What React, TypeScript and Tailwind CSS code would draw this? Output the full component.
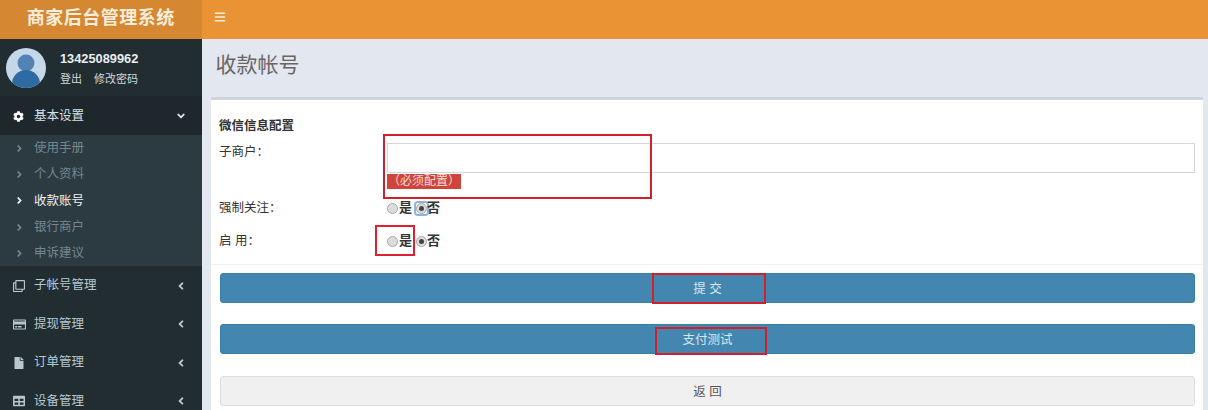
import React from 'react';
import { FaAngleDown, FaAngleLeft, FaAngleRight, FaBars, FaCog, FaFile, FaRegClone, FaRegCreditCard, FaTable } from 'react-icons/fa';

const FONT = '"Liberation Sans", "Noto Sans CJK SC", sans-serif';

const subItems = [
  { label: '使用手册' },
  { label: '个人资料' },
  { label: '收款账号', active: true },
  { label: '银行商户' },
  { label: '申诉建议' },
];

const Avatar = () => (
  <svg width="40" height="40" viewBox="0 0 40 40" className="shrink-0">
    <defs>
      <clipPath id="avatar-clip">
        <circle cx="20" cy="20" r="20" />
      </clipPath>
    </defs>
    <g clipPath="url(#avatar-clip)">
      <rect width="40" height="40" fill="#c4d8ea" />
      <circle cx="20" cy="15" r="8.5" fill="#5383b4" />
      <ellipse cx="20" cy="36" rx="14" ry="14" fill="#2f6ba3" />
    </g>
  </svg>
);

const Radio = ({ checked, focused }: { checked?: boolean; focused?: boolean }) => (
  <span className={`shrink-0 rounded-[2px] ${focused ? 'outline-2 outline-[#8fb4e0]' : ''}`}>
    <span className="flex h-[11px] w-[11px] items-center justify-center rounded-full border border-[#a9a9a9] bg-[#dcdcdc]">
      {checked && <span className="h-[5px] w-[5px] rounded-full bg-[#444]" />}
    </span>
  </span>
);

const RadioPair = ({ focused }: { focused?: boolean }) => (
  <div className="flex items-center text-[13px] font-bold text-[#333]">
    <Radio />
    <span className="ml-px mr-[4px]">是</span>
    <Radio checked focused={focused} />
    <span>否</span>
  </div>
);

const MenuRow = ({ icon, label }: { icon: React.ReactNode; label: string }) => (
  <div className="flex h-[38.5px] items-center pl-[13px] pr-[15px] text-[12.5px] text-[#b8c7ce]">
    <span className="flex w-[21px] shrink-0 items-center">{icon}</span>
    <span className="flex-1">{label}</span>
    <FaAngleLeft size={12} />
  </div>
);

const Button = ({ label, className }: { label: string; className: string }) => (
  <button className={`flex h-[30px] w-full items-center justify-center rounded-[3px] border pt-[2px] text-[12.5px] ${className}`}>
    {label}
  </button>
);

const App = () => {
  return (
    <div className="flex h-[410px] w-[1208px] flex-col overflow-hidden bg-[#e3e7ef]" style={{ fontFamily: FONT }}>
      {/* Header */}
      <div className="flex h-[39px] shrink-0 bg-[#ea9335] text-white">
        <div className="flex w-[201.5px] shrink-0 items-center justify-center bg-[#d68731] pb-[3px] font-['Liberation_Serif','Noto_Sans_CJK_SC',serif] text-[18px] font-bold tracking-[0.5px] text-[#fbeedd]">
          商家后台管理系统
        </div>
        <div className="flex items-center pb-[5px] pl-[12.5px] text-[#fbeedd]">
          <FaBars size={12} />
        </div>
      </div>

      <div className="relative flex min-h-0 flex-1">
        {/* Sidebar */}
        <div className="w-[201.5px] shrink-0 bg-[#222d32]">
          <div className="flex h-[57px] items-center pl-[6px]">
            <Avatar />
            <div className="ml-[14px] pt-px">
              <div className="text-[12.8px] font-bold leading-[16px] text-[#e8eef2]">13425089962</div>
              <div className="mt-[5px] flex gap-[12px] text-[11px] leading-[14px] text-[#d0d8dc]">
                <span>登出</span>
                <span>修改密码</span>
              </div>
            </div>
          </div>

          <div className="flex h-[39px] items-center bg-[#1e282c] pl-[13px] pr-[15px] pt-px text-[12.5px] text-[#d8e0e4]">
            <span className="flex w-[21px] shrink-0 items-center">
              <FaCog size={11} className="text-white" />
            </span>
            <span className="flex-1">基本设置</span>
            <FaAngleDown size={12} />
          </div>

          <div className="h-[131px] bg-[#2c3b41] pt-[0.5px]">
            {subItems.map((item) => (
              <div
                key={item.label}
                className={`flex h-[26.2px] items-center pl-[14px] text-[12.5px] ${
                  item.active ? 'text-[#eef2f4]' : 'text-[#75868e]'
                }`}
              >
                <span className="flex w-[20px] shrink-0 items-center">
                  <FaAngleRight size={11} />
                </span>
                {item.label}
              </div>
            ))}
          </div>

          <div className="pt-[0.5px]">
            <MenuRow icon={<FaRegClone size={12} />} label="子帐号管理" />
            <MenuRow icon={<FaRegCreditCard size={13} />} label="提现管理" />
            <MenuRow icon={<FaFile size={12} />} label="订单管理" />
            <MenuRow icon={<FaTable size={12} />} label="设备管理" />
          </div>
        </div>

        {/* Content */}
        <div className="min-w-0 flex-1 pl-[9.5px] pr-[5px]">
          <div className="flex h-[58px] items-center pb-[6px] pl-[4.5px] text-[21px] text-[#666]">收款帐号</div>

          <div className="h-[320px] border-t-[3px] border-[#cdd4df] bg-white">
            <div className="pl-[8px] pr-[8px] pt-[18px]">
              <div className="pt-px text-[12.5px] font-bold leading-[15px] text-[#333]">微信信息配置</div>
              <div className="mt-[2px] flex">
                <div className="w-[168px] pt-[8px] text-[12.5px] leading-[16px] text-[#333]">子商户：</div>
                <div className="min-w-0 flex-1">
                  <div className="mt-[7px] h-[30px] border border-[#d2d6de] bg-white" />
                  <div className="mt-px w-[74px] bg-[#d0453a] text-center text-[12px] leading-[15px] text-[#f6dcd9]">
                    （必须配置）
                  </div>
                </div>
              </div>

              <div className="mt-[10px] flex h-[18px] items-center">
                <div className="w-[168px] pt-px text-[12.5px] text-[#333]">强制关注：</div>
                <RadioPair focused />
              </div>
              <div className="mt-[15px] flex h-[18px] items-center">
                <div className="w-[168px] pt-px text-[12.5px] text-[#333]">启 用：</div>
                <RadioPair />
              </div>
            </div>

            <div className="mt-[14px] border-t border-[#f0f0f0] pl-[9px] pr-[8px] pt-[8px]">
              <Button label="提 交" className="border-[#367fa9] bg-[#4387b0] text-[#dbe8f0]" />
              <div className="h-[21px]" />
              <Button label="支付测试" className="border-[#367fa9] bg-[#4387b0] text-[#dbe8f0]" />
              <div className="h-[22px]" />
              <Button label="返 回" className="border-[#ddd] bg-[#f0f0f0] text-[#555]" />
            </div>
          </div>
        </div>

        {/* Red annotation boxes drawn over the screenshot */}
        <div className="absolute left-[383px] top-[95px] h-[65px] w-[269px] border-2 border-[#d0202c]" />
        <div className="absolute left-[375px] top-[186px] h-[31px] w-[40px] border-2 border-[#e0202c]" />
        <div className="absolute left-[652px] top-[234px] h-[31px] w-[114px] border-2 border-[#d0202c]" />
        <div className="absolute left-[655px] top-[288px] h-[28px] w-[112px] border-2 border-[#d0202c]" />
      </div>
    </div>
  );
};

export default App;
